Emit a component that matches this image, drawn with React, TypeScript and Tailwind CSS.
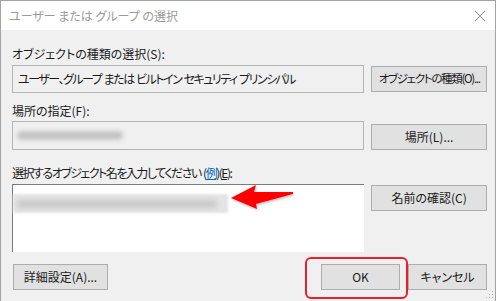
const font = { fontFamily: '"Noto Sans CJK JP", "Noto Sans", sans-serif' }

const Btn = ({ label, className = "" }: { label: React.ReactNode; className?: string }) => (
  <div
    className={`h-[26px] flex items-center justify-center bg-[#e1e1e1] border border-[#adadad] text-[12px] text-[#1a1a1a] whitespace-nowrap ${className}`}
  >
    {label}
  </div>
)

const Arrow = () => (
  <svg width="70" height="30" viewBox="0 0 70 30" className="absolute left-[226px] top-[181px]">
    <defs>
      <filter id="sh" x="-20%" y="-40%" width="140%" height="180%">
        <feDropShadow dx="1" dy="1.5" stdDeviation="1.2" floodColor="#000" floodOpacity="0.25" />
      </filter>
    </defs>
    <path d="M4 16 L29 3 L27 10 L66 10 L66 12 L29 22 L30 27 Z" fill="#ff0000" filter="url(#sh)" />
  </svg>
)

const App = () => {
  return (
    <div className="w-[498px] h-[301px] bg-white overflow-hidden [font-feature-settings:'palt']" style={font}>
      <div className="relative w-[496px] h-[301px] border-l border-t border-r border-[#a3a3a3] bg-[#f0f0f0] flex flex-col">
        {/* title bar */}
        <div className="h-[29px] bg-white flex items-center justify-between pl-[8px] pr-[8px] shrink-0">
          <span className="text-[12px] text-[#9a9a9a]">ユーザー または グループ の選択</span>
          <svg width="12" height="12" viewBox="0 0 12 12" className="mr-[1px]">
            <path d="M1 1 L11 11 M11 1 L1 11" stroke="#8a8a8a" strokeWidth="1" />
          </svg>
        </div>

        <div className="flex flex-col pl-[11px] pr-[8px]">
          <div className="mt-[16px] h-[16px] leading-[16px] text-[12px] text-[#1a1a1a]">
            オブジェクトの種類の選択(S):
          </div>
          <div className="mt-[3px] flex items-start gap-[7px]">
            <div className="w-[353px] h-[28px] border border-[#b5b5b5] bg-[#f0f0f0] flex items-center pl-[5px] text-[12px] text-[#1a1a1a] whitespace-pre tracking-[-1.5px]">
              ユーザー、グループ  または  ビルトイン  セキュリティ  プリンシパル
            </div>
            <Btn
              label={<span className="text-[11.5px] tracking-[-1.3px]">オブジェクトの種類(O)...</span>}
              className="w-[116px] mt-[1px] overflow-hidden"
            />
          </div>

          <div className="mt-[10px] h-[16px] leading-[16px] text-[12px] text-[#1a1a1a]">
            場所の指定(F):
          </div>
          <div className="mt-[2px] flex items-start gap-[7px]">
            <div className="w-[353px] h-[29px] border border-[#b5b5b5] bg-[#f0f0f0] flex items-center pl-[4px]">
              <div className="w-[106px] h-[9px] rounded-full bg-[#c4c4c4] blur-[2px]" />
            </div>
            <Btn label="場所(L)..." className="w-[116px] mt-[3px]" />
          </div>

          <div className="mt-[15px] h-[16px] leading-[16px] text-[12px] text-[#1a1a1a] whitespace-pre tracking-[-1.5px]">
            選択するオブジェクト名を入力してください  (<span className="text-[#0066cc] underline">例</span>)(
            <span className="underline">E</span>):
          </div>
          <div className="mt-[3px] flex items-start gap-[7px]">
            <div className="w-[353px] h-[68px] border-t border-l border-[#7a7a7a] bg-white pt-[9px]">
              <div className="h-[19px] w-[215px] bg-[#e4e4e4] flex items-center pl-[4px] blur-[1px]">
                <div className="w-[200px] h-[8px] rounded-full bg-[#c9c9c9] blur-[2px]" />
              </div>
            </div>
            <Btn label="名前の確認(C)" className="w-[116px] mt-[1px]" />
          </div>

          <div className="mt-[12px] flex items-start">
            <Btn label="詳細設定(A)..." className="w-[95px] ml-[1px]" />
            <div className="ml-auto flex items-start gap-[8px]">
              <Btn label="OK" className="w-[79px]" />
              <Btn label="キャンセル" className="w-[79px]" />
            </div>
          </div>
        </div>

        {/* highlight around OK */}
        <div className="absolute left-[304px] top-[256px] w-[103px] h-[42px] border-2 border-[#e8202a] rounded-[6px]" />
        <Arrow />

        {/* resize grip */}
        <svg width="8" height="8" viewBox="0 0 8 8" className="absolute right-[1px] bottom-[2px]">
          <rect x="6" y="0" width="1" height="1" fill="#b0b0b0" />
          <rect x="3" y="3" width="1" height="1" fill="#b0b0b0" />
          <rect x="6" y="3" width="1" height="1" fill="#b0b0b0" />
          <rect x="0" y="6" width="1" height="1" fill="#b0b0b0" />
          <rect x="3" y="6" width="1" height="1" fill="#b0b0b0" />
          <rect x="6" y="6" width="1" height="1" fill="#b0b0b0" />
        </svg>
      </div>
    </div>
  )
}

export default App
